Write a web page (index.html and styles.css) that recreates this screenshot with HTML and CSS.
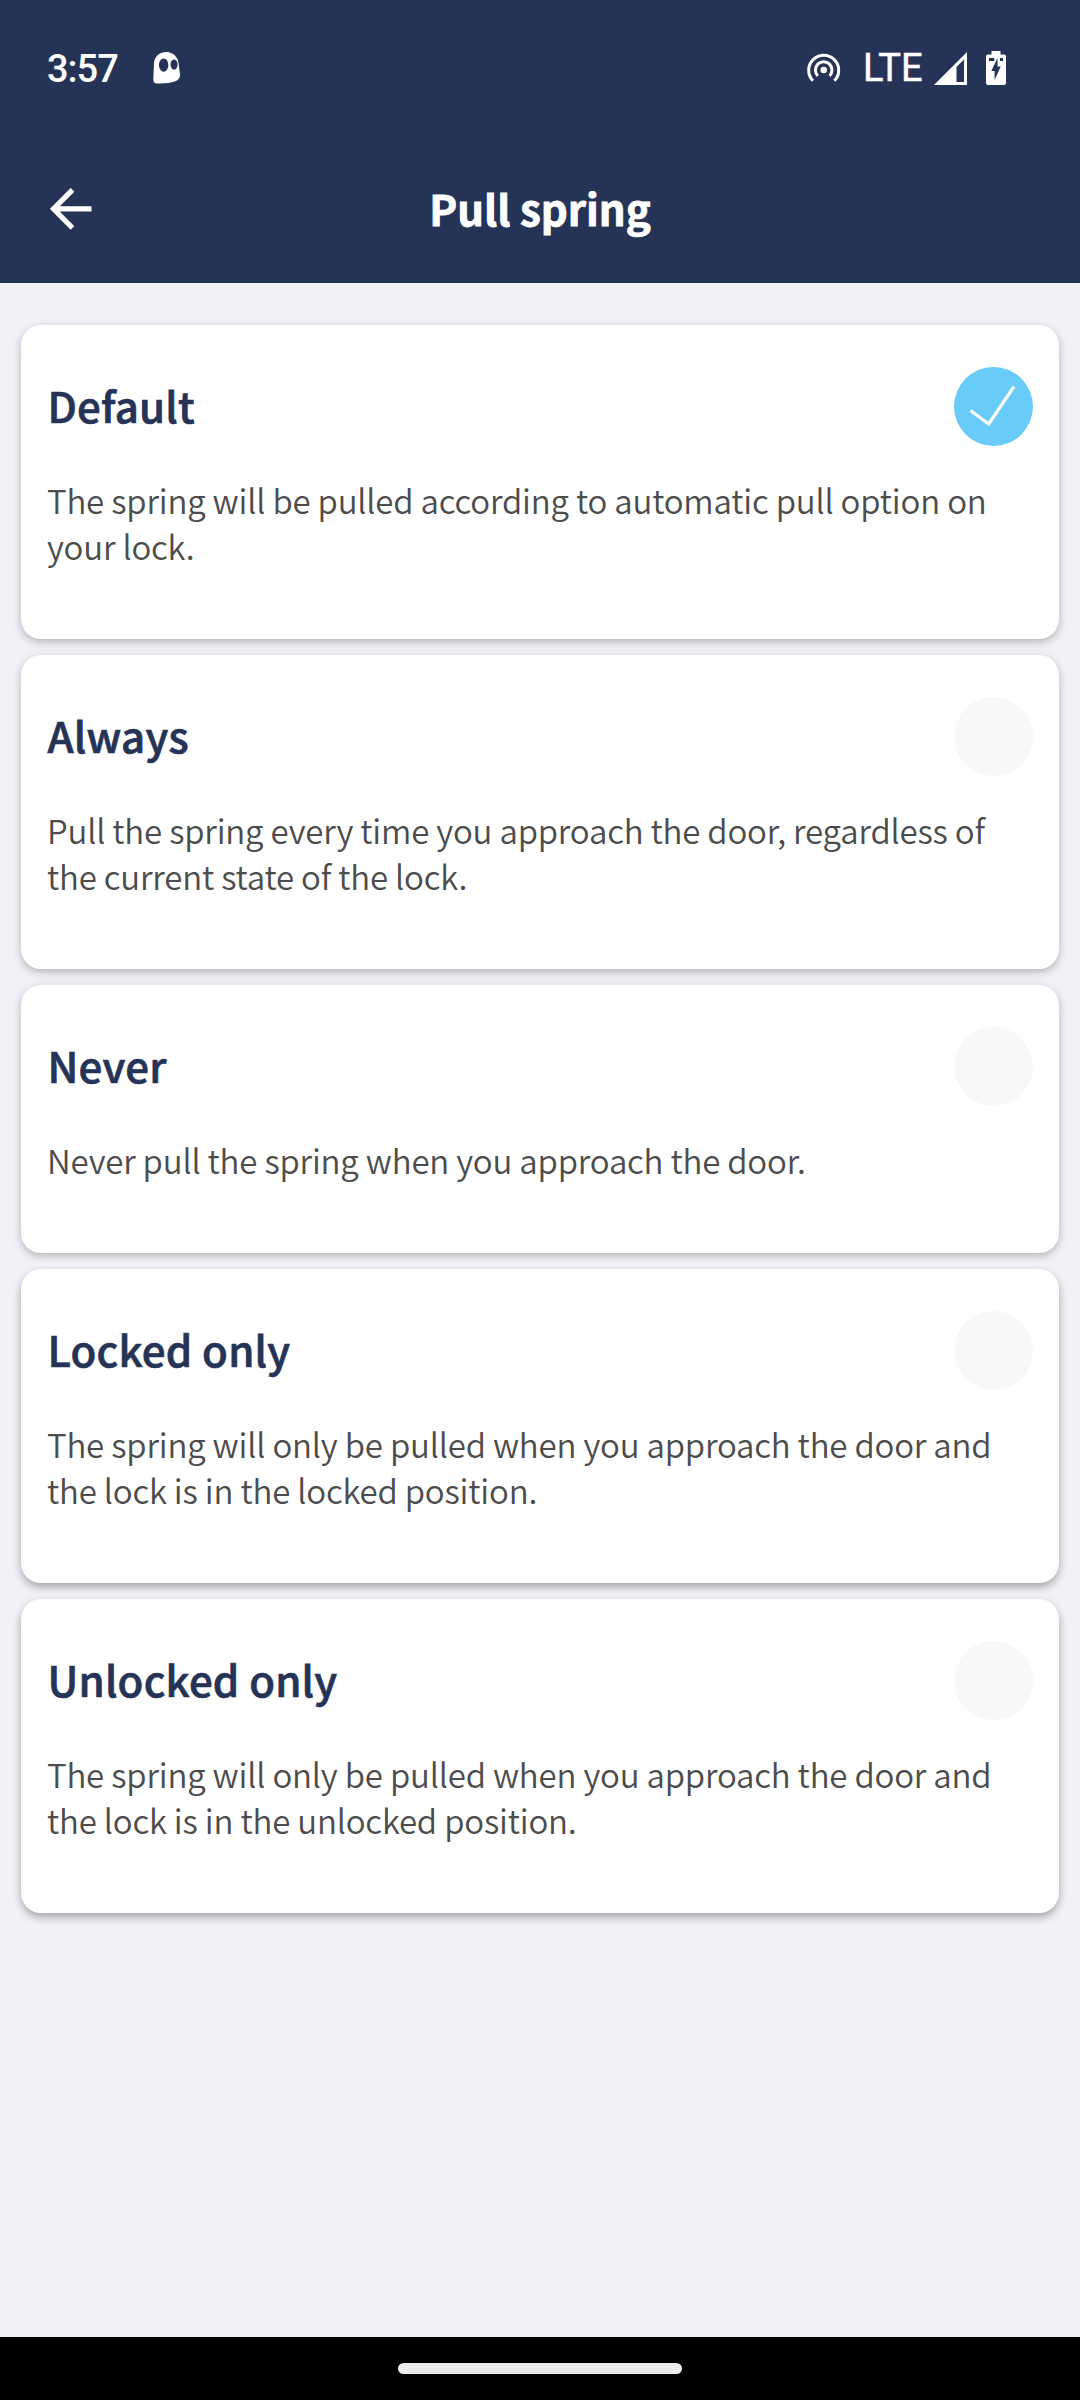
FILE: index.html
```html
<!DOCTYPE html>
<html lang="en">
<head>
<meta charset="utf-8">
<title>Pull spring</title>
<link rel="stylesheet" href="styles.css">
</head>
<body>
<header class="header">
  <div class="status">
    <span class="clock">3:57</span>
    <svg class="ghost" width="28" height="32" viewBox="0 0 28 32"><path fill="#fff" fill-rule="evenodd" d="M13.500 0C20 0 25 5 25.500 11L27 22C27.500 27 24 29 19 30.300C14 31.300 9 31.600 4 31.600C1.500 31.600.300 30 .300 27L1 11C1.500 4.500 6.500 0 13.500 0ZM10.700 6.500C8.200 6.500 6 9.300 6 13S8.200 19.700 10.700 19.700S15.300 16.700 15.300 13S13.200 6.500 10.700 6.500ZM21.200 7.500C19.200 7.500 17.600 9.800 17.600 12.600S19.200 17.700 21.200 17.700S24.600 15.400 24.600 12.600S23.200 7.500 21.200 7.500Z"/></svg>
    <div class="status-right">
      <svg class="hotspot" width="34" height="30" viewBox="0 0 34 30"><circle cx="16.700" cy="17" r="3.300" fill="#fff"/><g fill="none" stroke="#fff" stroke-width="3"><path d="M10.900 22.900A8.300 8.300 0 1 1 22.500 22.900"/><path d="M6 27.800A15 15 0 1 1 27.400 27.800"/></g></svg>
      <span class="network">LTE</span>
      <svg class="signal" width="33" height="33" viewBox="0 0 33 33"><path fill="#fff" fill-rule="evenodd" d="M33 0V33H0ZM30 7.500L22.500 15V30H30Z"/></svg>
      <svg class="battery" width="20" height="34" viewBox="0 0 20 34"><path fill="#fff" d="M5.500 0H14.500V3.500H18Q20 3.500 20 5.500V32Q20 34 18 34H2Q0 34 0 32V5.500Q0 3.500 2 3.500H5.500Z"/><path fill="#253356" d="M3 7H8.300V10H3ZM14 7H17V10H14ZM11.500 7V15.500H14.700L8.600 29V20H5.300Z"/></svg>
    </div>
  </div>
  <div class="toolbar">
    <svg class="back" width="42" height="42" viewBox="0 0 42 42"><path fill="none" stroke="#fff" stroke-width="5.200" d="M22.500 1.800L3.500 20.900L22.500 40M4 20.900H41.500"/></svg>
    <h1 class="title">Pull spring</h1>
  </div>
</header>
<main class="options">
  <section class="card">
    <div class="card-head"><h2 class="name">Default</h2><span class="radio selected"><svg width="79" height="79" viewBox="0 0 79 79"><path fill="none" stroke="#fff" stroke-width="3.200" d="M16.500 43.500L34.700 57L60 19.500"/></svg></span></div>
    <p class="desc">The spring will be pulled according to automatic pull option on<br>your lock.</p>
  </section>
  <section class="card">
    <div class="card-head"><h2 class="name">Always</h2><span class="radio"></span></div>
    <p class="desc">Pull the spring every time you approach the door, regardless of<br>the current state of the lock.</p>
  </section>
  <section class="card">
    <div class="card-head"><h2 class="name">Never</h2><span class="radio"></span></div>
    <p class="desc">Never pull the spring when you approach the door.</p>
  </section>
  <section class="card deep">
    <div class="card-head"><h2 class="name">Locked only</h2><span class="radio"></span></div>
    <p class="desc">The spring will only be pulled when you approach the door and<br>the lock is in the locked position.</p>
  </section>
  <section class="card deep">
    <div class="card-head"><h2 class="name">Unlocked only</h2><span class="radio"></span></div>
    <p class="desc">The spring will only be pulled when you approach the door and<br>the lock is in the unlocked position.</p>
  </section>
</main>
<footer class="nav"><span class="handle"></span></footer>
</body>
</html>
```
FILE: styles.css
```css
* { box-sizing: border-box; }
body {
  margin: 0;
  width: 1080px;
  height: 2400px;
  display: flex;
  flex-direction: column;
  background: #f2f1f7;
  font-family: "Noto Sans CJK SC", "Noto Sans", sans-serif;
}
svg { display: block; flex: none; }
h1, h2, p { margin: 0; }
.header { height: 283px; background: #253356; color: #fff; }
.status {
  height: 136px;
  display: flex;
  align-items: center;
  padding: 0 74px 0 47px;
  font-family: Roboto, sans-serif;
}
.clock { font-size: 38px; font-weight: 500; width: 106px; letter-spacing: -1px; padding-top: 2px; }
.status-right { margin-left: auto; display: flex; align-items: center; }
.network { font-size: 38px; font-weight: 400; -webkit-text-stroke: .5px #fff; margin-left: 22px; width: 71px; }
.battery { margin-left: 19px; }
.toolbar {
  height: 147px;
  display: grid;
  grid-template-columns: 100px 1fr 100px;
  align-items: center;
  padding: 0 50px 2px;
}
.title {
  padding-bottom: 2px;
  font-size: 42px;
  line-height: 60px;
  font-weight: 700;
  text-align: center;
  -webkit-text-stroke: .8px #fff;
}
.options {
  flex: 1;
  padding: 42px 21px 0;
  display: flex;
  flex-direction: column;
  gap: 16px;
}
.card {
  padding: 42px 26px 70px;
  background: #fff;
  border-radius: 20px;
  box-shadow: 0 3px 8px rgba(0, 0, 0, .26);
}
.deep { box-shadow: 0 4px 9px rgba(0, 0, 0, .32); }
.card-head { display: flex; justify-content: space-between; align-items: center; height: 79px; }
.name {
  padding: 0 0 4px .5px;
  font-size: 42px;
  line-height: 60px;
  font-weight: 500;
  letter-spacing: .2px;
  color: #253356;
  -webkit-text-stroke: .7px #253356;
}
.radio { width: 79px; height: 79px; border-radius: 50%; background: #f8f8f8; }
.selected { background: #68cbf8; }
.desc {
  margin-top: 31px;
  font-size: 33px;
  line-height: 46px;
  font-weight: 350;
  letter-spacing: -.19px;
  color: #4c4c4c;
  white-space: nowrap;
}
.nav { height: 63px; background: #000; display: flex; justify-content: center; align-items: center; }
.handle { width: 284px; height: 11px; border-radius: 6px; background: #ebebeb; }
```
